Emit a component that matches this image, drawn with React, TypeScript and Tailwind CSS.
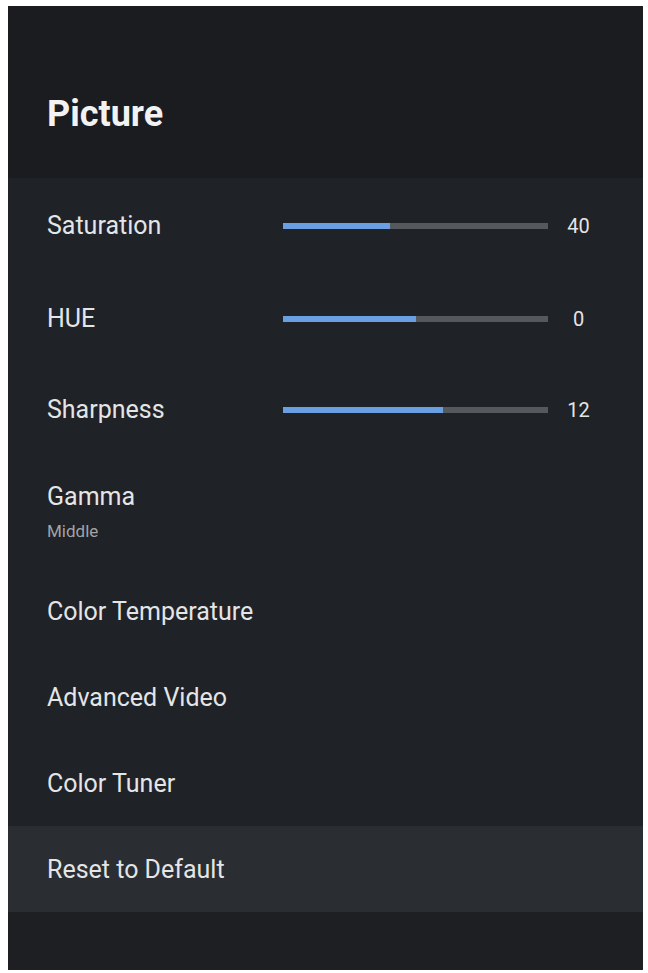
import React from "react";

const font = { fontFamily: "Roboto, 'Noto Sans', sans-serif" };

function SliderRow({ label, value, pct, h }: { label: string; value: string; pct: number; h: string }) {
  return (
    <div className={`flex items-center pt-[2px] ${h}`}>
      <div className="w-[275px] pl-[39px] text-[25px] text-[#e4e5e6]">{label}</div>
      <div className="relative h-[6px] w-[265px] bg-[#55585c]">
        <div className="absolute left-0 top-0 h-full bg-[#6aa0e2]" style={{ width: `${pct}%` }} />
      </div>
      <div className="w-[60px] pl-[1px] text-center text-[20px] text-[#e4e5e6]">{value}</div>
    </div>
  );
}

function TextRow({ label, h, highlight }: { label: string; h: string; highlight?: boolean }) {
  return (
    <div className={`flex items-center pt-[2px] ${h} ${highlight ? "bg-[#2a2d31]" : ""}`}>
      <div className="pl-[39px] text-[25px] text-[#e4e5e6]">{label}</div>
    </div>
  );
}

export default function App() {
  return (
    <div className="w-[648px] h-[973px] bg-white pt-[6px] pl-[8px] pr-[5px] pb-[3px]" style={font}>
      <div className="flex h-full flex-col bg-[#1f2226]">
        <div className="flex h-[172px] items-center bg-[#1b1c20] pl-[39px] pt-[44px]">
          <div className="text-[36px] font-bold text-[#f2f2f2]">Picture</div>
        </div>
        <SliderRow label="Saturation" value="40" pct={40.5} h="h-[94px]" />
        <SliderRow label="HUE" value="0" pct={50} h="h-[92px]" />
        <SliderRow label="Sharpness" value="12" pct={60.5} h="h-[90px]" />
        <div className="flex h-[114px] flex-col justify-center pl-[39px] pt-[2px]">
          <div className="text-[25px] leading-[30px] text-[#e4e5e6]">Gamma</div>
          <div className="mt-[8px] text-[17px] leading-[22px] text-[#a2a4a7]">Middle</div>
        </div>
        <TextRow label="Color Temperature" h="h-[86px]" />
        <TextRow label="Advanced Video" h="h-[86px]" />
        <TextRow label="Color Tuner" h="h-[86px]" />
        <TextRow label="Reset to Default" h="h-[86px]" highlight />
        <div className="flex-1 bg-[#1d1f22]" />
      </div>
    </div>
  );
}
